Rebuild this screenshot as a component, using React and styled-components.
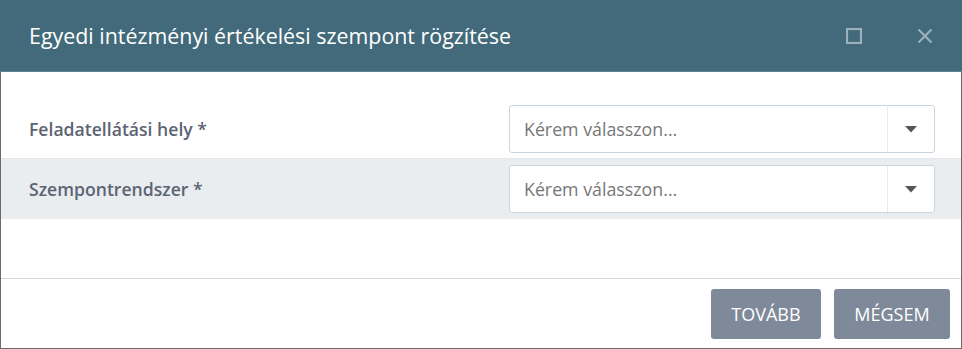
import React from 'react'
import styled, {createGlobalStyle} from 'styled-components'

const GlobalStyle = createGlobalStyle`
    html, body {
        margin: 0;
        padding: 0;
        background: #ffffff;
    }
    body {
        font-family: "Open Sans", "Noto Sans", sans-serif;
    }
`

const fields = [
    {label: 'Feladatellátási hely *', shaded: false},
    {label: 'Szempontrendszer *', shaded: true},
]

const App = () => {
    return (
        <>
            <GlobalStyle />
            <Dialog>
                <Header>
                    <Title>Egyedi intézményi értékelési szempont rögzítése</Title>
                    <HeaderTools>
                        <ToolButton aria-label="maximize">
                            <svg width="16" height="16" viewBox="0 0 16 16">
                                <rect x="1" y="1" width="14" height="14" fill="none" stroke="currentColor" strokeWidth="2.2" />
                            </svg>
                        </ToolButton>
                        <ToolButton aria-label="close">
                            <svg width="16" height="16" viewBox="0 0 16 16">
                                <path d="M1.5 1.5 L14.5 14.5 M14.5 1.5 L1.5 14.5" stroke="currentColor" strokeWidth="2.2" />
                            </svg>
                        </ToolButton>
                    </HeaderTools>
                </Header>
                <Body>
                    {fields.map((f) => (
                        <Row key={f.label} shaded={f.shaded}>
                            <Label>{f.label}</Label>
                            <Select>
                                <Placeholder>Kérem válasszon...</Placeholder>
                                <Arrow>
                                    <svg width="12" height="7" viewBox="0 0 12 7">
                                        <path d="M0 0 H12 L6 6.5 Z" fill="#555" />
                                    </svg>
                                </Arrow>
                            </Select>
                        </Row>
                    ))}
                </Body>
                <Footer>
                    <Button>Tovább</Button>
                    <Button wide>Mégsem</Button>
                </Footer>
            </Dialog>
        </>
    )
}

export default App

const Dialog = styled.div`
    box-sizing: border-box;
    width: 962px;
    height: 349px;
    display: flex;
    flex-direction: column;
    border: 1px solid #6b6b6b;
    border-top: none;
    background: #ffffff;
`
const Header = styled.div`
    height: 71px;
    display: flex;
    align-items: center;
    justify-content: space-between;
    padding: 0 29px 0 28px;
    background: #426a7b;
    border-bottom: 1px solid #5d8090;
    margin: 0 -1px;
`
const Title = styled.div`
    color: #ffffff;
    font-size: 21.4px;
    font-weight: 400;
    margin-left: 1px;
`
const HeaderTools = styled.div`
    display: flex;
    align-items: center;
    gap: 55px;
`
const ToolButton = styled.div`
    width: 16px;
    height: 16px;
    display: flex;
    color: #9bb0bb;
`
const Body = styled.div`
    flex: 1;
    padding-top: 27px;
`
const Row = styled.div`
    display: flex;
    align-items: center;
    justify-content: space-between;
    padding: 6px 26px 5px 28px;
    background: ${(p) => (p.shaded ? '#e9edf0' : '#ffffff')};
    border-bottom: ${(p) => (p.shaded ? '1px solid #e9edf0' : '1px solid #e3e7ea')};
`
const Label = styled.div`
    color: #5d6473;
    font-size: 17.6px;
    font-weight: 600;
`
const Select = styled.div`
    box-sizing: border-box;
    width: 426px;
    height: 48px;
    display: flex;
    align-items: stretch;
    background: #ffffff;
    border: 1px solid #c9d5e1;
    border-radius: 3px;
`
const Placeholder = styled.div`
    flex: 1;
    display: flex;
    align-items: center;
    padding-left: 14px;
    color: #777777;
    font-size: 17.8px;
`
const Arrow = styled.div`
    width: 46px;
    display: flex;
    align-items: center;
    justify-content: center;
    border-left: 1px solid #e8ecf0;
`
const Footer = styled.div`
    display: flex;
    justify-content: flex-end;
    gap: 13px;
    padding: 10px 11px 9px 0;
    border-top: 1px solid #d6d6d6;
`
const Button = styled.button`
    width: ${(p) => (p.wide ? '116px' : '110px')};
    height: 50px;
    padding: 0;
    border: none;
    border-radius: 3px;
    background: #7e8a99;
    color: #ffffff;
    font-family: "Open Sans", "Noto Sans", sans-serif;
    font-size: 18px;
    text-transform: uppercase;
`
